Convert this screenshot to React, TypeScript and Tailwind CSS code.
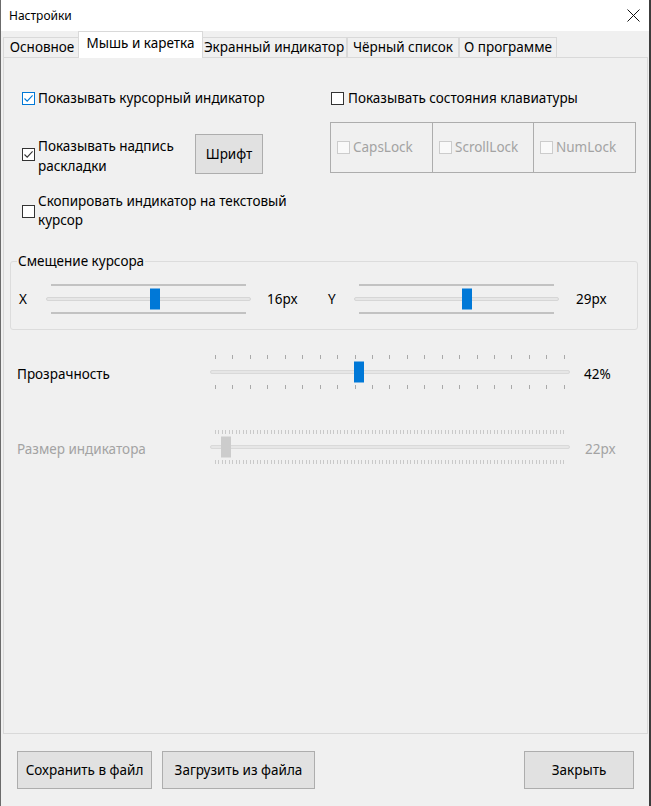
import React from 'react';

type BoxProps = { checked?: boolean; hover?: boolean; disabled?: boolean };

function CheckBox({ checked = false, hover = false, disabled = false }: BoxProps) {
  const border = disabled ? 'border-[#cccccc] bg-[#f9f9f9]' : hover ? 'border-[#0078d7] bg-white' : 'border-[#333333] bg-white';
  const stroke = hover ? '#0078d7' : '#333333';
  return (
    <span className={`shrink-0 inline-flex items-center justify-center w-[13px] h-[13px] border ${border}`}>
      {checked && (
        <svg width="11" height="11" viewBox="0 0 11 11">
          <path d="M1.5 5.5 L4.2 8.2 L9.6 2.4" fill="none" stroke={stroke} strokeWidth="1.1" />
        </svg>
      )}
    </span>
  );
}

function Ticks({ count, color }: { count: number; color: string }) {
  return (
    <div className="flex justify-between px-[5px] h-[4px]">
      {Array.from({ length: count }).map((_, i) => (
        <span key={i} className={`w-px h-full ${color}`} />
      ))}
    </div>
  );
}

// ползунок смещения: сплошные полосы сверху и снизу
function OffsetSlider({ thumb }: { thumb: number }) {
  return (
    <div className="relative w-[205px] h-[30px] flex flex-col justify-between">
      <div className="mx-[5px] h-[2px] bg-[#c2c2c2]" />
      <div className="h-[4px] rounded-[2px] border border-[#d6d6d6] bg-[#e6e6e6]" />
      <div className="mx-[5px] h-[2px] bg-[#c2c2c2]" />
      <div className="absolute top-1/2 -translate-y-1/2 w-[10px] h-[21px] bg-[#0078d7]" style={{ left: thumb }} />
    </div>
  );
}

function TickSlider({ thumb, ticks, disabled = false }: { thumb: number; ticks: number; disabled?: boolean }) {
  return (
    <div className="relative w-[360px] h-[34px] flex flex-col justify-between">
      <Ticks count={ticks} color={disabled ? 'bg-[#c9c9c9]' : 'bg-[#a9a9a9]'} />
      <div className="h-[4px] rounded-[2px] border border-[#d9d9d9] bg-[#e6e6e6]" />
      <Ticks count={ticks} color={disabled ? 'bg-[#c9c9c9]' : 'bg-[#a9a9a9]'} />
      <div
        className={`absolute top-1/2 -translate-y-1/2 w-[10px] h-[21px] ${disabled ? 'bg-[#cccccc]' : 'bg-[#0078d7]'}`}
        style={{ left: thumb }}
      />
    </div>
  );
}

const tabs = [
  { label: 'Основное', w: 'w-[77px]' },
  { label: 'Мышь и каретка', w: 'w-[125px]', active: true },
  { label: 'Экранный индикатор', w: 'w-[146px]' },
  { label: 'Чёрный список', w: 'w-[112px]' },
  { label: 'О программе', w: 'w-[98px]' },
];

export default function App() {
  return (
    <div className="w-[651px] h-[806px] flex flex-col bg-[#f0f0f0] border-l border-l-[#6b6b6b] border-r-2 border-r-[#3c3c3c] font-['Noto_Sans',sans-serif] text-[13.5px] text-black">
      {/* заголовок окна */}
      <div className="h-[31px] shrink-0 flex items-center justify-between bg-white pl-[8px] pr-[9px]">
        <span className="text-[12px]">Настройки</span>
        <svg width="13" height="13" viewBox="0 0 13 13">
          <path d="M0.5 0.5 L12.5 12.5 M12.5 0.5 L0.5 12.5" stroke="#111" strokeWidth="1" />
        </svg>
      </div>

      {/* вкладки */}
      <div className="ml-[2px] mr-[1px] flex items-end h-[26px] shrink-0 whitespace-nowrap">
        {tabs.map((t) =>
          t.active ? (
            <div
              key={t.label}
              className={`${t.w} -mx-[2px] relative z-10 -mb-px h-[27px] flex items-center justify-center bg-white border border-b-0 border-[#d9d9d9] pb-[3px]`}
            >
              {t.label}
            </div>
          ) : (
            <div
              key={t.label}
              className={`${t.w} h-[20px] flex items-center justify-center bg-[#f0f0f0] border border-b-0 border-[#d9d9d9] first:border-r-0`}
            >
              {t.label}
            </div>
          )
        )}
      </div>

      {/* панель вкладки */}
      <div className="ml-[2px] mr-[1px] h-[677px] shrink-0 border border-[#d9d9d9] bg-[#f0f0f0] flex flex-col">
        <div className="flex pt-[30px] pl-[18px]">
          <div className="w-[308px] flex flex-col">
            <div className="h-[20px] flex items-center gap-[3px]">
              <CheckBox checked hover />
              <span>Показывать курсорный индикатор</span>
            </div>
            <div className="mt-[26px] h-[40px] flex items-center">
              <CheckBox checked />
              <span className="ml-[3px] w-[157px] leading-[20px] pt-[3px]">
                Показывать надпись
                <br />
                раскладки
              </span>
              <button className="w-[68px] h-[40px] bg-[#e1e1e1] border border-[#adadad]">Шрифт</button>
            </div>
            <div className="mt-[18px] flex items-center">
              <CheckBox />
              <span className="ml-[3px] leading-[19px]">
                Скопировать индикатор на текстовый
                <br />
                курсор
              </span>
            </div>
          </div>

          <div className="flex flex-col">
            <div className="h-[20px] pl-[1px] flex items-center gap-[4px]">
              <CheckBox />
              <span>Показывать состояния клавиатуры</span>
            </div>
            <div className="mt-[14px] w-[306px] h-[51px] flex border border-[#adadad] text-[#a3a3a3]">
              <div className="w-[101px] flex items-center gap-[3px] pl-[6px]">
                <CheckBox disabled />
                <span>CapsLock</span>
              </div>
              <div className="w-[101px] flex items-center gap-[3px] pl-[6px] border-l border-[#adadad]">
                <CheckBox disabled />
                <span>ScrollLock</span>
              </div>
              <div className="flex-1 flex items-center gap-[3px] pl-[6px] border-l border-[#adadad]">
                <CheckBox disabled />
                <span>NumLock</span>
              </div>
            </div>
          </div>
        </div>

        <fieldset className="mt-[21px] ml-[6px] mr-[9px] border border-[#dcdcdc] rounded-[3px]">
          <legend className="ml-[6px] px-px leading-[20px]">Смещение курсора</legend>
          <div className="h-[58px] flex items-center pl-[8px] pb-[2px]">
            <span className="w-[27px]">X</span>
            <OffsetSlider thumb={104} />
            <span className="ml-[16px] w-[61px]">16px</span>
            <span className="w-[26px]">Y</span>
            <OffsetSlider thumb={108} />
            <span className="ml-[17px]">29px</span>
          </div>
        </fieldset>

        <div className="mt-[25px] flex items-center pl-[13px]">
          <span className="w-[193px] pt-[5px]">Прозрачность</span>
          <TickSlider thumb={144} ticks={21} />
          <span className="ml-[14px] pt-[5px]">42%</span>
        </div>

        <div className="mt-[41px] flex items-center pl-[13px] text-[#a3a3a3]">
          <span className="w-[193px] pt-[5px]">Размер индикатора</span>
          <TickSlider thumb={11} ticks={101} disabled />
          <span className="ml-[15px] pt-[5px]">22px</span>
        </div>
      </div>

      {/* нижние кнопки */}
      <div className="flex items-start pt-[17px] pl-[16px] pr-[15px]">
        <button className="w-[135px] h-[38px] bg-[#e1e1e1] border border-[#adadad]">Сохранить в файл</button>
        <button className="ml-[10px] w-[153px] h-[38px] bg-[#e1e1e1] border border-[#adadad]">Загрузить из файла</button>
        <button className="ml-auto w-[110px] h-[38px] bg-[#e1e1e1] border border-[#adadad]">Закрыть</button>
      </div>
    </div>
  );
}
